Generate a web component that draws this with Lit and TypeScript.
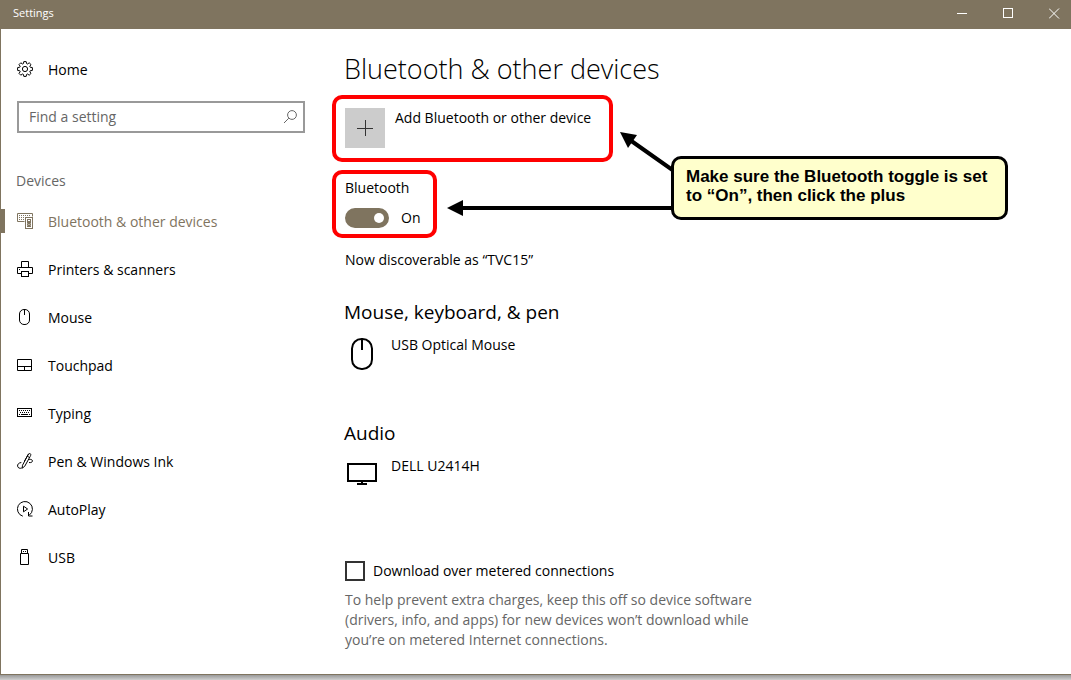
import { LitElement, html, css, svg, nothing } from "lit";
import { customElement, property, state } from "lit/decorators.js";

const icons = {
  gear: svg`<path d="M6.8.6h2.4l.4 2 .9.4 1.7-1.2 1.8 1.8-1.2 1.7.4.9 2.2.4v2.8l-2.2.4-.4.9 1.2 1.7-1.8 1.8-1.7-1.2-.9.4-.4 2H6.8l-.4-2-.9-.4-1.7 1.2L2 12.400l1.200-1.700-.4-.9L.600 9.400V6.600l2.200-.4.400-.9L2 3.600l1.800-1.800L5.500 3l.9-.4z"/><circle cx="8" cy="8" r="2.600"/>`,
  devices: svg`<path d="M7.500 8.500h-7v-8h15v3"/><path d="M2 2.500h12M2 4.500h6M2 6.500h5" stroke-dasharray="1 1"/><rect x="8.500" y="4.500" width="7" height="11"/><rect x="10.500" y="6.500" width="3" height="2"/><circle cx="12" cy="11.500" r="1.300" stroke-width="1.500"/><path d="M10 9.500h4M10 13.500h4"/>`,
  printer: svg`<path d="M4.500 6.500v-6h7v6M4.500 12.500h-4v-6h15v6h-4"/><rect x="4.500" y="10.500" width="7" height="5"/><path d="M2 8.500h1"/>`,
  mouse: svg`<rect x="2.500" y=".5" width="10" height="15" rx="4.500"/><path d="M7.500 1v5"/>`,
  touchpad: svg`<path d="M.5 2.500h14v11H.500zM.500 9.500h14M7.500 9.500v4"/>`,
  typing: svg`<rect x=".5" y="3.500" width="14" height="8"/><path d="M2 5.500h11M3 7.500h10" stroke-dasharray="1 1"/><path d="M2 9.500h1M4 9.500h7M12 9.500h1"/>`,
  pen: svg`<path d="M5.500 12.300 10.800 2.200c.5-1.100 1.700-2 2.500-1.500.8.500.500 1.700-.1 2.700L7.700 13.300 5.200 15.200zM10.300 3.200l2.200 1.300M7.500 8 11.600.800M4.300 9.500C1.700 9.800.300 11.400.600 13.200c.300 1.800 2.300 2.600 4.200 1.800M12.200 6.500c1.800-.400 3.300.2 3.200 1.500 0 1.200-1.500 1.900-3.400 1.500"/>`,
  autoplay: svg`<path d="M5.800 15.200A7.500 7.500 0 1 1 12.300 14.100M11.500 11v4h4M6.500 5.200v5.600L10.600 8z"/>`,
  usb: svg`<path d="M4.500 4.500v-4h6v4M3.500 4.500h8v11h-8zM6 2.500h1M8 2.500h1"/>`,
  search: svg`<circle cx="10" cy="6" r="4.400"/><path d="M6.800 9.200 2 14"/>`,
};

const navItems: { icon: keyof typeof icons; label: string }[] = [
  { icon: "devices", label: "Bluetooth & other devices" },
  { icon: "printer", label: "Printers & scanners" },
  { icon: "mouse", label: "Mouse" },
  { icon: "touchpad", label: "Touchpad" },
  { icon: "typing", label: "Typing" },
  { icon: "pen", label: "Pen & Windows Ink" },
  { icon: "autoplay", label: "AutoPlay" },
  { icon: "usb", label: "USB" },
];

@customElement("line-icon")
class LineIcon extends LitElement {
  @property() name: keyof typeof icons = "gear";

  static styles = css`
    :host { display: block; flex: none; width: 16px; height: 16px; }
    svg { display: block; width: 16px; height: 16px; fill: none; stroke: currentColor; stroke-width: 1; }
  `;

  render() {
    return html`<svg viewBox="0 0 16 16" aria-hidden="true">${icons[this.name]}</svg>`;
  }
}

@customElement("app-root")
class AppRoot extends LitElement {
  @state() current = 0;
  @state() bluetooth = true;

  static styles = css`
    :host {
      --accent: #7f745f;
      display: block;
      box-sizing: border-box;
      min-height: 100vh;
      padding-bottom: 5px;
      background: linear-gradient(to top, #cfcfcf, #999 5px);
      font: 14px/20px "Open Sans", "Noto Sans", sans-serif;
      color: #000;
    }
    * { box-sizing: border-box; }
    .window {
      min-height: calc(100vh - 5px);
      border-left: 1px solid var(--accent);
      border-bottom: 1px solid var(--accent);
      background: #fff;
    }
    .titlebar {
      display: flex;
      align-items: center;
      justify-content: space-between;
      height: 29px;
      padding-left: 12px;
      background: var(--accent);
      color: #fff;
      font-size: 11px;
      overflow: hidden;
    }
    .title { padding-bottom: 3px; }
    .controls { display: flex; margin-right: -6px; padding-bottom: 3px; }
    .control { width: 46px; height: 26px; padding: 0; border: 0; background: none; color: inherit; }
    .control svg { display: block; margin: 0 auto; width: 11px; height: 11px; fill: none; stroke: currentColor; }
    .body {
      display: grid;
      grid-template-columns: 304px minmax(0, 1fr);
      column-gap: 39px;
    }
    .sidebar { padding-top: 16px; }
    .item {
      position: relative;
      display: flex;
      align-items: center;
      gap: 15px;
      height: 48px;
      padding-left: 16px;
      color: inherit;
      text-decoration: none;
    }
    .item span { padding-top: 2px; }
    .item.active { color: var(--accent); }
    .item.active::before {
      content: "";
      position: absolute;
      left: 0;
      top: 12px;
      width: 4px;
      height: 24px;
      background: var(--accent);
    }
    .search {
      display: flex;
      align-items: center;
      height: 32px;
      margin: 8px 0 32px 16px;
      padding: 0 5px 0 10px;
      border: 2px solid #999;
      color: #666;
    }
    .search input {
      flex: 1;
      min-width: 0;
      padding: 0;
      border: 0;
      outline: 0;
      background: none;
      color: #000;
      font: inherit;
    }
    .search input::placeholder { color: #666; opacity: 1; }
    .group { margin: 0; padding-left: 15px; font-size: 14px; line-height: 32px; font-weight: 400; color: #666; }
    .content { position: relative; padding: 20px 24px 24px 0; }
    h1 { margin: 0 0 6px; font-size: 27px; line-height: 40px; font-weight: 300; }
    h2 { margin: 28px 0 9px; font-size: 19px; line-height: 28px; font-weight: 400; }
    .marked {
      width: fit-content;
      margin-left: -12px;
      border: 4px solid #f00;
      border-radius: 10px;
    }
    .add { padding: 9px 18px 10px 9px; }
    .add button {
      display: flex;
      align-items: flex-start;
      gap: 10px;
      padding: 0;
      border: 0;
      background: none;
      color: inherit;
      font: inherit;
      text-align: left;
    }
    .plus { width: 40px; height: 40px; padding: 12px; background: #ccc; }
    .plus svg { display: block; width: 17px; height: 17px; stroke: #333; }
    .power { margin-top: 8px; padding: 4px 13px 6px 9px; }
    .power label { display: block; }
    .switch { display: flex; align-items: center; gap: 12px; margin-top: 10px; height: 20px; }
    .switch input {
      appearance: none;
      display: flex;
      align-items: center;
      width: 44px;
      height: 20px;
      margin: 0;
      padding: 0 5px;
      border: 2px solid #333;
      border-radius: 10px;
    }
    .switch input::before { content: ""; width: 10px; height: 10px; border-radius: 50%; background: #333; }
    .switch input:checked { justify-content: flex-end; padding: 0 3px; border-color: var(--accent); background: var(--accent); }
    .switch input:checked::before { background: #fff; }
    .status { margin: 12px 0 0 1px; }
    .device { display: flex; gap: 14px; min-height: 48px; margin-bottom: 36px; padding-left: 1px; }
    .device svg { width: 32px; height: 36px; fill: none; stroke: #000; stroke-width: 2; }
    .metered { display: flex; align-items: center; gap: 8px; margin: 57px 0 9px 1px; }
    .metered input { appearance: none; width: 20px; height: 20px; margin: 0; border: 2px solid #333; }
    .metered input:checked { background: var(--accent); box-shadow: inset 0 0 0 3px #fff; }
    .help { max-width: 420px; margin: 0 0 0 1px; color: #666; }
    .callout {
      position: absolute;
      top: 127px;
      left: 327px;
      width: 337px;
      height: 64px;
      padding: 8px 12px;
      border: 3px solid #000;
      border-radius: 10px;
      background: #ffc;
      font: 700 17px/19px "Liberation Sans", Arial, sans-serif;
    }
    .arrows { position: absolute; top: 99px; left: 99px; width: 232px; height: 92px; pointer-events: none; }
    .arrows path { stroke: #000; stroke-width: 4; }
    .arrows polygon { fill: #000; }
  `;

  render() {
    return html`
      <div class="window">
        <header class="titlebar">
          <span class="title">Settings</span>
          <div class="controls">
            <button class="control" aria-label="Minimize"><svg viewBox="0 0 11 11"><path d="M0 5.500h10" /></svg></button>
            <button class="control" aria-label="Maximize"><svg viewBox="0 0 11 11"><rect x=".5" y=".5" width="9" height="9" /></svg></button>
            <button class="control" aria-label="Close"><svg viewBox="0 0 11 11"><path d="M0 .5l10 10M10 .5l-10 10" /></svg></button>
          </div>
        </header>
        <div class="body">
          <aside class="sidebar">
            <a class="item" href="#home"><line-icon name="gear"></line-icon><span>Home</span></a>
            <div class="search">
              <input type="text" placeholder="Find a setting" aria-label="Find a setting" />
              <line-icon name="search"></line-icon>
            </div>
            <h3 class="group">Devices</h3>
            <nav>
              ${navItems.map(
                (item, i) => html`<a
                  class="item ${i === this.current ? "active" : ""}"
                  href="#${item.icon}"
                  aria-current=${i === this.current ? "page" : nothing}
                  @click=${() => (this.current = i)}
                  ><line-icon name=${item.icon}></line-icon><span>${item.label}</span></a>`
              )}
            </nav>
          </aside>
          <main class="content">
            <h1>Bluetooth &amp; other devices</h1>
            <div class="marked add">
              <button>
                <span class="plus"><svg viewBox="0 0 17 17"><path d="M0 8.500h16M8.500 0v16" /></svg></span>
                <span>Add Bluetooth or other device</span>
              </button>
            </div>
            <div class="marked power">
              <label for="bt">Bluetooth</label>
              <div class="switch">
                <input
                  id="bt"
                  type="checkbox"
                  role="switch"
                  .checked=${this.bluetooth}
                  @change=${(e: Event) => (this.bluetooth = (e.target as HTMLInputElement).checked)}
                />
                <span>${this.bluetooth ? "On" : "Off"}</span>
              </div>
            </div>
            <p class="status">Now discoverable as “TVC15”</p>

            <h2>Mouse, keyboard, &amp; pen</h2>
            <div class="device">
              <svg viewBox="0 0 32 36" aria-hidden="true"><rect x="7" y="4" width="20" height="30" rx="9.500" /><path d="M17 4v11" /></svg>
              <span>USB Optical Mouse</span>
            </div>
            <h2>Audio</h2>
            <div class="device">
              <svg viewBox="0 0 32 36" aria-hidden="true"><rect x="3" y="8" width="28" height="17" /><path d="M17 25v3M12 28h10" /></svg>
              <span>DELL U2414H</span>
            </div>

            <div class="metered">
              <input id="metered" type="checkbox" />
              <label for="metered">Download over metered connections</label>
            </div>
            <p class="help">
              To help prevent extra charges, keep this off so device software (drivers, info, and apps) for new devices
              won’t download while you’re on metered Internet connections.
            </p>

            <svg class="arrows" viewBox="0 0 232 92" aria-hidden="true">
              <path d="M231 43 187 12M231 80H18" />
              <polygon points="177,4 194,7 185,20" />
              <polygon points="4,80 20,72 20,88" />
            </svg>
            <div class="callout">Make sure the Bluetooth toggle is set to “On”, then click the plus</div>
          </main>
        </div>
      </div>
    `;
  }
}
